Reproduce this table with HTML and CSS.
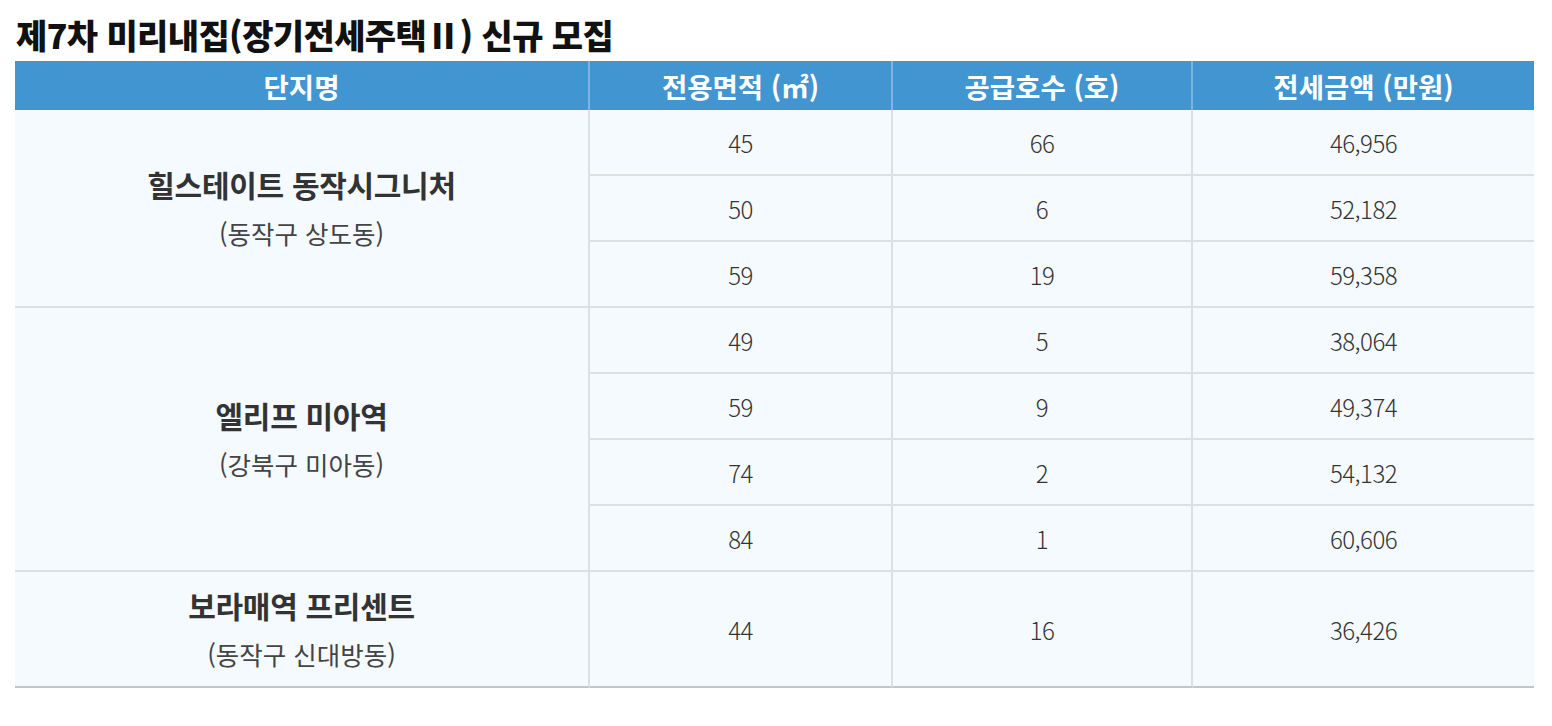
FILE: index.html
```html
<!DOCTYPE html>
<html lang="ko">
<head>
<meta charset="utf-8">
<title>제7차 미리내집 신규 모집</title>
<link rel="stylesheet" href="styles.css">
</head>
<body>
<h1 class="title">제7차 미리내집(장기전세주택Ⅱ) 신규 모집</h1>
<table class="supply">
  <colgroup>
    <col class="c-name">
    <col class="c-area">
    <col class="c-units">
    <col class="c-price">
  </colgroup>
  <thead>
    <tr>
      <th>단지명</th>
      <th>전용면적 (㎡)</th>
      <th>공급호수 (호)</th>
      <th class="last">전세금액 (만원)</th>
    </tr>
  </thead>
  <tbody>
    <tr>
      <td class="name" rowspan="3"><div class="nm">힐스테이트 동작시그니처</div><div class="loc">(동작구 상도동)</div></td>
      <td>45</td><td>66</td><td class="last">46,956</td>
    </tr>
    <tr><td>50</td><td>6</td><td class="last">52,182</td></tr>
    <tr><td>59</td><td>19</td><td class="last">59,358</td></tr>
    <tr>
      <td class="name" rowspan="4"><div class="nm">엘리프 미아역</div><div class="loc">(강북구 미아동)</div></td>
      <td>49</td><td>5</td><td class="last">38,064</td>
    </tr>
    <tr><td>59</td><td>9</td><td class="last">49,374</td></tr>
    <tr><td>74</td><td>2</td><td class="last">54,132</td></tr>
    <tr><td>84</td><td>1</td><td class="last">60,606</td></tr>
    <tr class="final">
      <td class="name"><div class="nm">보라매역 프리센트</div><div class="loc">(동작구 신대방동)</div></td>
      <td>44</td><td>16</td><td class="last">36,426</td>
    </tr>
  </tbody>
</table>
</body>
</html>
```
FILE: styles.css
```css
html, body {
  margin: 0;
  padding: 0;
  background: #ffffff;
}
body {
  padding: 10px 18px 0 15px;
  font-family: "Noto Sans CJK KR", "Noto Sans", sans-serif;
  color: #333;
}
.title {
  margin: 0 0 0 1px;
  font-size: 34px;
  line-height: 49px;
  height: 51px;
  font-weight: 900;
  letter-spacing: -0.6px;
  color: #111;
}
.supply {
  width: 1519px;
  table-layout: fixed;
  border-collapse: separate;
  border-spacing: 0;
}
.c-name { width: 575px; }
.c-area { width: 303px; }
.c-units { width: 300px; }
.c-price { width: 341px; }
.supply th {
  height: 49px;
  padding: 0;
  background: #4195d0;
  color: #fff;
  font-size: 27.5px;
  line-height: 40px;
  font-weight: 700;
  letter-spacing: 0;
  border-right: 2px solid #7db4e1;
  vertical-align: middle;
  text-align: center;
}
.supply th.last { border-right: none; }
.supply td {
  height: 64px;
  padding: 0;
  background: #f5faff;
  border-right: 2px solid #dcdfe3;
  border-bottom: 2px solid #dcdfe3;
  text-align: center;
  vertical-align: middle;
  font-size: 24px;
  font-weight: 300;
  letter-spacing: -0.5px;
  color: #333;
}
.supply td.last { border-right: none; }
.supply tr.final td {
  height: 114px;
  border-bottom: 2px solid #c3c5c8;
}
.nm {
  font-size: 30px;
  font-weight: 700;
  line-height: 44px;
  letter-spacing: -0.3px;
  color: #333;
}
.loc {
  margin-top: 5px;
  font-size: 25.5px;
  font-weight: 400;
  line-height: 44px;
  letter-spacing: 0;
  color: #444;
}
```
